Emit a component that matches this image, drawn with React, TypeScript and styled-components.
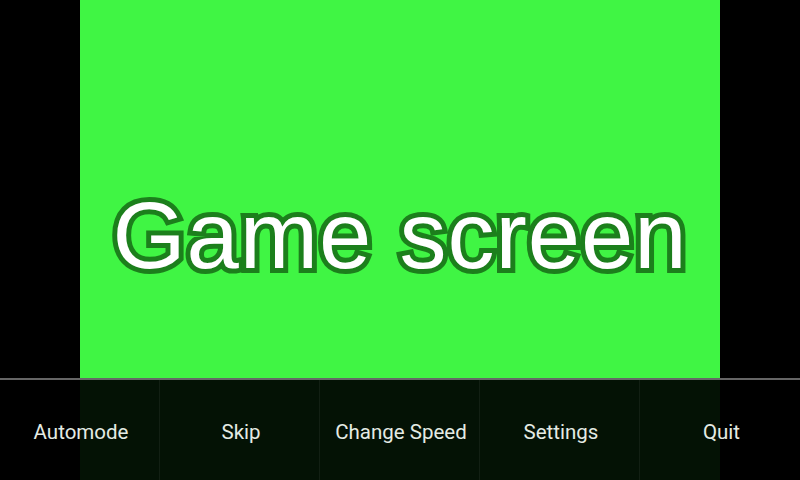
import React from "react";
import styled, { createGlobalStyle } from "styled-components";

const GlobalStyle = createGlobalStyle`
  html, body {
    margin: 0;
    padding: 0;
    background: #000;
    overflow: hidden;
  }
`;

const Stage = styled.div`
  position: relative;
  width: 800px;
  height: 480px;
  background: #000;
  display: flex;
  justify-content: center;
`;

const GameScreen = styled.div`
  width: 640px;
  height: 480px;
  background: #40f544;
  display: flex;
  align-items: center;
  justify-content: center;
  padding-bottom: 8px;
  box-sizing: border-box;
`;

const Title = styled.h1`
  margin: 0;
  font-family: "Liberation Sans", Arial, sans-serif;
  font-weight: 400;
  font-size: 94px;
  letter-spacing: 1px;
  color: #fff;
  -webkit-text-stroke: 10px #1c7f1c;
  paint-order: stroke fill;
  text-shadow: 0 0 1px #1c7f1c;
`;

const MenuBar = styled.nav`
  position: absolute;
  left: 0;
  right: 0;
  bottom: 0;
  height: 102px;
  display: grid;
  grid-template-columns: repeat(5, 1fr);
  background: rgba(0, 0, 0, 0.93);
  border-top: 2px solid rgba(128, 128, 128, 0.8);
  box-sizing: border-box;
`;

const MenuItem = styled.button<{ last?: boolean }>`
  border: none;
  border-right: ${({ last }) => (last ? "none" : "1px solid rgba(255, 255, 255, 0.06)")};
  background: transparent;
  color: #e4ebe4;
  font-family: Roboto, "Noto Sans", sans-serif;
  font-size: 20.5px;
  padding: 3px 0 0 3px;
  cursor: pointer;
`;

const items = ["Automode", "Skip", "Change Speed", "Settings", "Quit"];

export default function App() {
  return (
    <>
      <GlobalStyle />
      <Stage>
        <GameScreen>
          <Title>Game screen</Title>
        </GameScreen>
        <MenuBar>
          {items.map((item, i) => (
            <MenuItem key={item} last={i === items.length - 1} type="button">
              {item}
            </MenuItem>
          ))}
        </MenuBar>
      </Stage>
    </>
  );
}
